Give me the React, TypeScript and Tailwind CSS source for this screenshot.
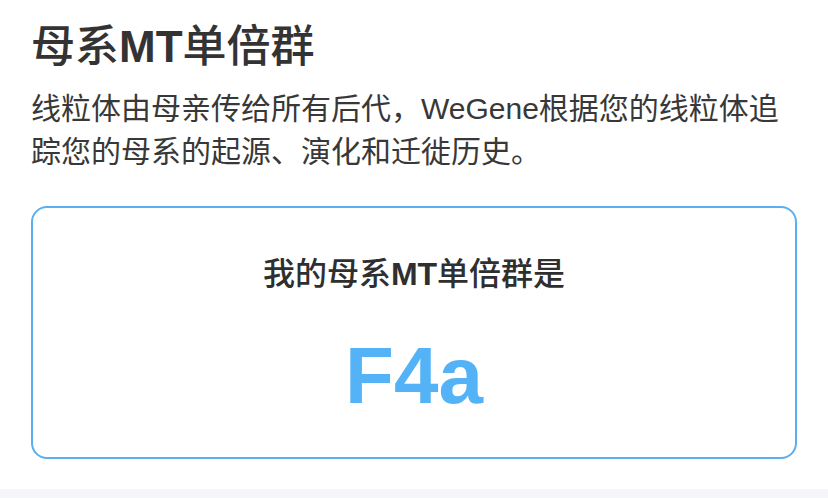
import React from 'react';

const font = { fontFamily: '"Liberation Sans", "Noto Sans CJK SC", sans-serif' };

const App: React.FC = () => {
    return (
        <div className="w-[828px] h-[498px] bg-white overflow-hidden flex flex-col" style={font}>
            <div className="px-[31px] pt-[18px] pb-[30px]">
                <h1 className="text-[44px] leading-[58px] font-medium text-[#333333]">
                    母系<span className="font-bold">MT</span>单倍群
                </h1>
                <p className="mt-[11px] text-[30px] leading-[43px] text-[#383838]">
                    线粒体由母亲传给所有后代，WeGene根据您的线粒体追踪您的母系的起源、演化和迁徙历史。
                </p>
                <div className="mt-[33px] h-[253px] border-2 border-[#5aaff0] rounded-[16px] flex flex-col items-center pt-[44px]">
                    <p className="text-[32px] leading-[44px] font-medium text-[#2f2f2f]">
                        我的母系<span className="font-bold">MT</span>单倍群是
                    </p>
                    <p className="mt-[36px] text-[80px] leading-[88px] font-bold text-[#54b2f6]">F4a</p>
                </div>
            </div>
            <div className="flex-1 bg-[#f4f6fa]"></div>
        </div>
    );
};

export default App;
